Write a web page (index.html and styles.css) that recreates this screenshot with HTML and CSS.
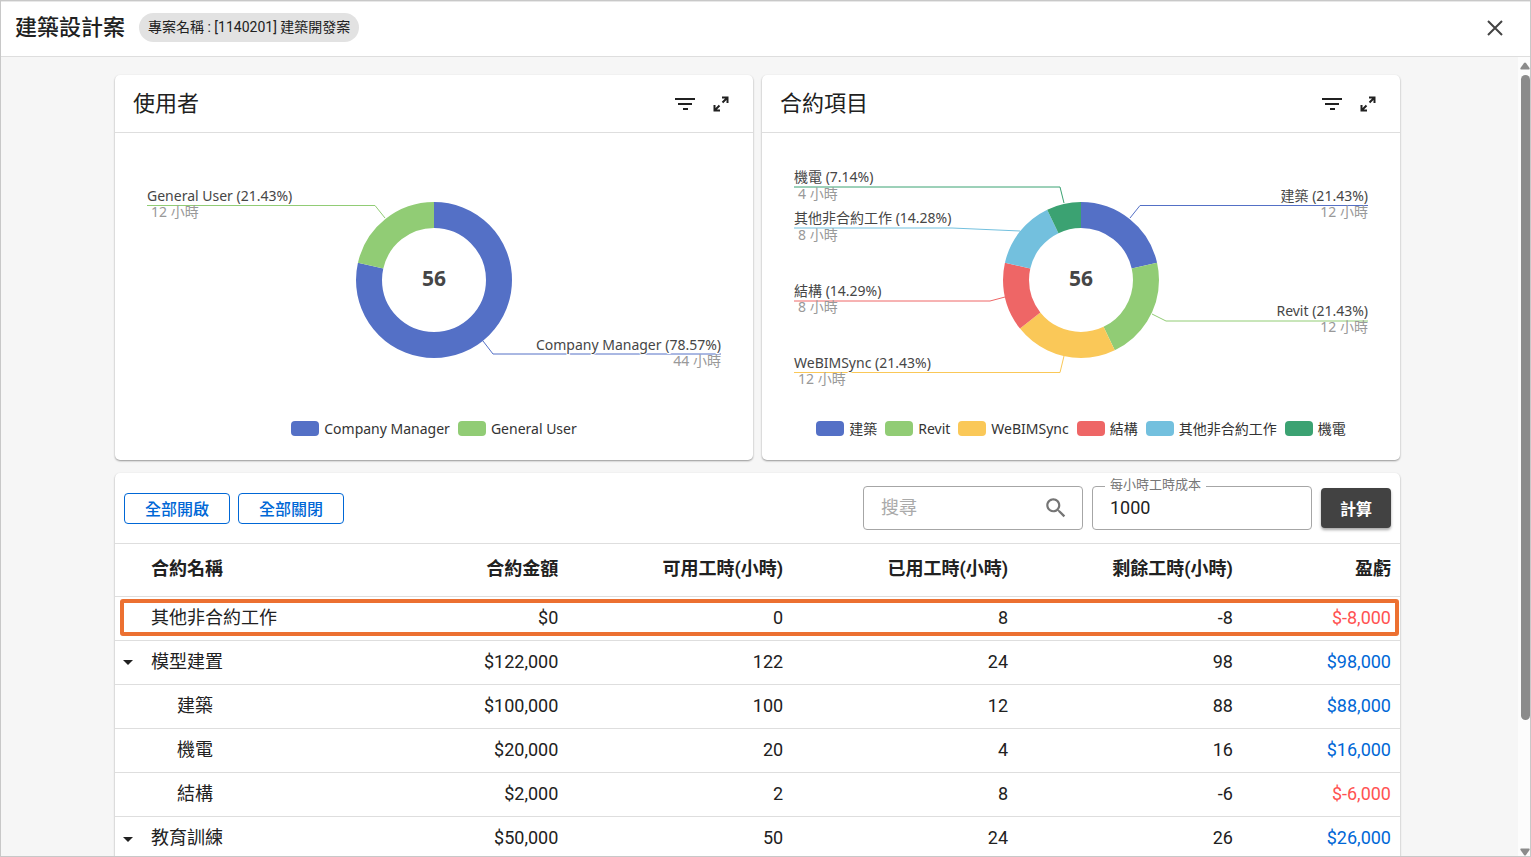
FILE: index.html
```html
<!DOCTYPE html>
<html lang="zh-Hant">
<head>
  <meta charset="UTF-8" />
  <meta name="viewport" content="width=device-width, initial-scale=1.0" />
  <title>建築設計案</title>
  <link rel="stylesheet" href="styles.css">
</head>
<body>
  <header class="topbar">
    <h1>建築設計案</h1>
    <span class="chip">專案名稱 : [1140201] 建築開發案</span>
    <button type="button" class="icon-btn close" aria-label="關閉">
      <svg width="16" height="16" viewBox="0 0 16 16"><path d="M1 1l14 14M15 1L1 15" stroke="#444" stroke-width="2" fill="none"/></svg>
    </button>
  </header>

  <div class="body">
    <main class="content">
      <div class="charts">
        <section class="card">
          <div class="card-header">
            <h2>使用者</h2>
            <button type="button" class="icon-btn" aria-label="篩選">
              <svg width="20" height="14" viewBox="0 0 20 14"><path d="M0 2h20M3 7h14M8 12h5" stroke="#212121" stroke-width="2"/></svg>
            </button>
            <button type="button" class="icon-btn" aria-label="展開">
              <svg width="16" height="16" viewBox="0 0 16 16"><path d="M9 1.500h5.500V7M14 2L9.500 6.500M1.500 9v5.500H7M2 14l4.500-4.500" stroke="#212121" stroke-width="2" fill="none"/></svg>
            </button>
          </div>
          <svg class="chart" viewBox="0 0 638 285">
            <!-- pathLength is the total hours, so each dash is the hours of its slice -->
            <g class="ring">
              <circle class="c1" cx="319" cy="147" r="65" pathLength="56" stroke-dasharray="44 12" />
              <circle class="c2" cx="319" cy="147" r="65" pathLength="56" stroke-dasharray="12 44" stroke-dashoffset="-44" />
            </g>
            <g class="lines">
              <path class="c2" d="M32 72.500H260L270 85" />
              <path class="c1" d="M606 221H378L368 208" />
            </g>
            <text x="32" y="68">General User (21.43%)</text>
            <text class="sub" x="36" y="84">12 小時</text>
            <text class="end" x="606" y="217">Company Manager (78.57%)</text>
            <text class="sub end" x="606" y="233">44 小時</text>
            <text class="total" x="319" y="153">56</text>
          </svg>
          <ul class="legend">
            <li><i class="b1"></i>Company Manager</li>
            <li><i class="b2"></i>General User</li>
          </ul>
        </section>

        <section class="card">
          <div class="card-header">
            <h2>合約項目</h2>
            <button type="button" class="icon-btn" aria-label="篩選">
              <svg width="20" height="14" viewBox="0 0 20 14"><path d="M0 2h20M3 7h14M8 12h5" stroke="#212121" stroke-width="2"/></svg>
            </button>
            <button type="button" class="icon-btn" aria-label="展開">
              <svg width="16" height="16" viewBox="0 0 16 16"><path d="M9 1.500h5.500V7M14 2L9.500 6.500M1.500 9v5.500H7M2 14l4.500-4.500" stroke="#212121" stroke-width="2" fill="none"/></svg>
            </button>
          </div>
          <svg class="chart" viewBox="0 0 638 285">
            <g class="ring">
              <circle class="c1" cx="319" cy="147" r="65" pathLength="56" stroke-dasharray="12 44" />
              <circle class="c2" cx="319" cy="147" r="65" pathLength="56" stroke-dasharray="12 44" stroke-dashoffset="-12" />
              <circle class="c3" cx="319" cy="147" r="65" pathLength="56" stroke-dasharray="12 44" stroke-dashoffset="-24" />
              <circle class="c4" cx="319" cy="147" r="65" pathLength="56" stroke-dasharray="8 48" stroke-dashoffset="-36" />
              <circle class="c5" cx="319" cy="147" r="65" pathLength="56" stroke-dasharray="8 48" stroke-dashoffset="-44" />
              <circle class="c6" cx="319" cy="147" r="65" pathLength="56" stroke-dasharray="4 52" stroke-dashoffset="-52" />
            </g>
            <g class="lines">
              <path class="c6" d="M32 54H298L302 70" />
              <path class="c5" d="M32 95H190L258 98" />
              <path class="c4" d="M32 168H228L243 164" />
              <path class="c3" d="M32 239.500H298L302 223" />
              <path class="c1" d="M606 72.500H378L368 85" />
              <path class="c2" d="M606 188H404L390 181" />
            </g>
            <text x="32" y="49">機電 (7.14%)</text>
            <text class="sub" x="36" y="66">4 小時</text>
            <text x="32" y="90">其他非合約工作 (14.28%)</text>
            <text class="sub" x="36" y="107">8 小時</text>
            <text x="32" y="163">結構 (14.29%)</text>
            <text class="sub" x="36" y="179">8 小時</text>
            <text x="32" y="235">WeBIMSync (21.43%)</text>
            <text class="sub" x="36" y="251">12 小時</text>
            <text class="end" x="606" y="68">建築 (21.43%)</text>
            <text class="sub end" x="606" y="84">12 小時</text>
            <text class="end" x="606" y="183">Revit (21.43%)</text>
            <text class="sub end" x="606" y="199">12 小時</text>
            <text class="total" x="319" y="153">56</text>
          </svg>
          <ul class="legend">
            <li><i class="b1"></i>建築</li>
            <li><i class="b2"></i>Revit</li>
            <li><i class="b3"></i>WeBIMSync</li>
            <li><i class="b4"></i>結構</li>
            <li><i class="b5"></i>其他非合約工作</li>
            <li><i class="b6"></i>機電</li>
          </ul>
        </section>
      </div>

      <section class="card">
        <div class="toolbar">
          <div class="expand-actions">
            <button type="button" class="btn-outline">全部開啟</button>
            <button type="button" class="btn-outline">全部關閉</button>
          </div>
          <div class="field">
            <input type="text" id="search" placeholder="搜尋" aria-label="搜尋" />
            <svg width="26" height="26" viewBox="0 0 24 24"><path fill="#757575" d="M15.500 14h-.79l-.28-.27C15.410 12.590 16 11.110 16 9.500 16 5.910 13.090 3 9.500 3S3 5.910 3 9.500 5.910 16 9.500 16c1.610 0 3.090-.59 4.230-1.570l.27.28v.79l5 4.990L20.490 19l-4.990-5zm-6 0C7.010 14 5 11.990 5 9.500S7.010 5 9.500 5 14 7.010 14 9.500 11.990 14 9.500 14z"/></svg>
          </div>
          <div class="field">
            <label for="cost">每小時工時成本</label>
            <input type="text" id="cost" value="1000" />
          </div>
          <button type="button" class="btn-dark">計算</button>
        </div>

        <table>
          <thead>
            <tr>
              <th>合約名稱</th>
              <th>合約金額</th>
              <th>可用工時(小時)</th>
              <th>已用工時(小時)</th>
              <th>剩餘工時(小時)</th>
              <th>盈虧</th>
            </tr>
          </thead>
          <tbody>
            <tr class="marked">
              <td>其他非合約工作</td>
              <td>$0</td>
              <td>0</td>
              <td>8</td>
              <td>-8</td>
              <td class="loss">$-8,000</td>
            </tr>
            <tr class="group">
              <td><button type="button" class="toggle" aria-label="收合"></button>模型建置</td>
              <td>$122,000</td>
              <td>122</td>
              <td>24</td>
              <td>98</td>
              <td class="profit">$98,000</td>
            </tr>
            <tr class="child">
              <td>建築</td>
              <td>$100,000</td>
              <td>100</td>
              <td>12</td>
              <td>88</td>
              <td class="profit">$88,000</td>
            </tr>
            <tr class="child">
              <td>機電</td>
              <td>$20,000</td>
              <td>20</td>
              <td>4</td>
              <td>16</td>
              <td class="profit">$16,000</td>
            </tr>
            <tr class="child">
              <td>結構</td>
              <td>$2,000</td>
              <td>2</td>
              <td>8</td>
              <td>-6</td>
              <td class="loss">$-6,000</td>
            </tr>
            <tr class="group">
              <td><button type="button" class="toggle" aria-label="收合"></button>教育訓練</td>
              <td>$50,000</td>
              <td>50</td>
              <td>24</td>
              <td>26</td>
              <td class="profit">$26,000</td>
            </tr>
          </tbody>
        </table>
      </section>
    </main>

    <div class="scrollbar" aria-hidden="true">
      <svg width="10" height="8" viewBox="0 0 10 8"><path fill="#8b8b8b" d="M4 1q1-1 2 0l3.500 5q.5 1.500-.5 1.500H1Q0 7.500.5 6z"/></svg>
      <div class="track"><div class="thumb"></div></div>
      <svg width="10" height="8" viewBox="0 0 10 8"><path fill="#8b8b8b" d="M4 7q1 1 2 0l3.500-5q.5-1.500-.5-1.500H1Q0 .5.5 2z"/></svg>
    </div>
  </div>
</body>
</html>
```
FILE: styles.css
```css
:root {
  --text: #212121;
  --line: #dedede;
  --blue: #0067d6;
  --red: #ff5252;
  --c1: #5470c6;
  --c2: #91cc75;
  --c3: #fac858;
  --c4: #ee6666;
  --c5: #73c0de;
  --c6: #3ba272;
}

* {
  box-sizing: border-box;
}

body {
  margin: 0;
  height: 100vh;
  display: flex;
  flex-direction: column;
  overflow: hidden;
  border: 1px solid #c8c8c8;
  background: #f6f6f6;
  color: var(--text);
  font-family: Roboto, "Noto Sans CJK TC", sans-serif;
  font-size: 18px;
}

h1, h2 {
  margin: 0;
  font-size: 22px;
  line-height: 32px;
  font-weight: 500;
}

h2 {
  font-weight: 400;
}

button, input {
  font-family: inherit;
  color: inherit;
}

button {
  padding: 0;
  cursor: pointer;
}

/* top bar */
.topbar {
  flex: none;
  display: flex;
  align-items: center;
  height: 56px;
  padding: 0 23px 3px 14px;
  background: #fff;
  border-top: 1px solid #e8e8e8;
  border-bottom: 1px solid var(--line);
}

.chip {
  margin-left: 14px;
  padding: 0 9px;
  border-radius: 15px;
  background: #e2e2e2;
  font-size: 14px;
  line-height: 29px;
}

.icon-btn {
  display: flex;
  align-items: center;
  justify-content: center;
  width: 24px;
  height: 24px;
  border: none;
  background: none;
}

.close {
  margin-left: auto;
}

/* page body */
.body {
  flex: 1;
  min-height: 0;
  display: flex;
}

.content {
  flex: 1;
  overflow: hidden;
  padding: 18px 20px 0 16px;
}

.content > * {
  max-width: 1285px;
  margin: 0 auto 13px;
}

.charts {
  display: grid;
  grid-template-columns: 1fr 1fr;
  gap: 9px;
}

.card {
  background: #fff;
  border-radius: 5px;
  box-shadow: 0 1px 2px rgba(0, 0, 0, 0.4);
}

.card-header {
  display: flex;
  align-items: center;
  gap: 12px;
  height: 58px;
  padding: 0 20px 0 18px;
  border-bottom: 1px solid var(--line);
}

.card-header h2 {
  flex: 1;
}

/* charts */
.chart {
  display: block;
  width: 100%;
}

.ring circle {
  fill: none;
  stroke-width: 26;
  transform: rotate(-90deg);
  transform-origin: 319px 147px;
}

.lines path {
  fill: none;
  stroke-width: 1;
}

.c1 { stroke: var(--c1); }
.c2 { stroke: var(--c2); }
.c3 { stroke: var(--c3); }
.c4 { stroke: var(--c4); }
.c5 { stroke: var(--c5); }
.c6 { stroke: var(--c6); }

.chart text {
  font-family: "Noto Sans", "Noto Sans CJK TC", sans-serif;
  font-size: 14px;
  fill: #464646;
  stroke: #fff;
  stroke-width: 2px;
  paint-order: stroke;
}

.chart .sub {
  fill: #999;
  stroke: none;
}

.chart .end {
  text-anchor: end;
}

.chart .total {
  font-size: 21px;
  font-weight: 700;
  text-anchor: middle;
}

.legend {
  display: flex;
  justify-content: center;
  gap: 8px;
  margin: 0;
  padding: 0 0 21px;
  list-style: none;
  font-family: "Noto Sans", "Noto Sans CJK TC", sans-serif;
  font-size: 14px;
  line-height: 21px;
  color: #333;
}

.legend li {
  display: flex;
  align-items: center;
  gap: 5px;
}

.legend i {
  width: 28px;
  height: 15px;
  border-radius: 4px;
}

.b1 { background: var(--c1); }
.b2 { background: var(--c2); }
.b3 { background: var(--c3); }
.b4 { background: var(--c4); }
.b5 { background: var(--c5); }
.b6 { background: var(--c6); }

/* toolbar */
.toolbar {
  display: flex;
  align-items: center;
  gap: 9px;
  height: 70px;
  padding: 0 9px;
}

.expand-actions {
  display: flex;
  gap: 8px;
  margin-right: auto;
}

.btn-outline {
  width: 106px;
  height: 31px;
  border: 1px solid var(--blue);
  border-radius: 4px;
  background: #fff;
  color: var(--blue);
  font-size: 16px;
  font-weight: 500;
}

.field {
  position: relative;
  width: 220px;
}

.field input {
  display: block;
  width: 100%;
  height: 44px;
  padding: 0 17px 2px;
  border: 1px solid #a6a6a6;
  border-radius: 4px;
  background: none;
  font-size: 18px;
}

.field input::placeholder {
  color: #aaa;
}

.field label {
  position: absolute;
  top: -11px;
  left: 13px;
  padding: 0 5px;
  background: #fff;
  color: #777;
  font-size: 13px;
  line-height: 20px;
}

.field svg {
  position: absolute;
  top: 9px;
  right: 14px;
}

.btn-dark {
  width: 70px;
  height: 40px;
  border: none;
  border-radius: 4px;
  background: #424242;
  color: #fff;
  font-size: 16px;
  font-weight: 700;
  box-shadow: 0 2px 3px rgba(0, 0, 0, 0.35);
}

/* contract table */
table {
  width: 100%;
  table-layout: fixed;
  border-collapse: collapse;
}

th, td {
  height: 44px;
  padding: 0 9px 2px;
  border-top: 1px solid var(--line);
  line-height: 24px;
  text-align: right;
  white-space: nowrap;
}

th {
  height: 53px;
  width: 17.5%;
  font-weight: 700;
}

th:first-child {
  width: auto;
}

th:last-child {
  width: 12.3%;
}

th:first-child, td:first-child {
  padding-left: 36px;
  text-align: left;
}

.child td:first-child {
  padding-left: 62px;
}

.group td:first-child {
  padding-left: 0;
}

.toggle {
  width: 26px;
  height: 20px;
  margin-right: 10px;
  border: none;
  background: none;
  vertical-align: middle;
}

.toggle::before {
  content: "";
  display: block;
  width: 0;
  margin: 0 auto;
  border: 5px solid transparent;
  border-top-color: var(--text);
  border-bottom: none;
}

.profit {
  color: var(--blue);
}

.loss {
  color: var(--red);
}

.marked {
  position: relative;
}

.marked td:first-child::after {
  content: "";
  position: absolute;
  top: 2px;
  left: 5px;
  right: 1px;
  bottom: 5px;
  border: 4px solid #ec7031;
  border-radius: 3px;
}

/* scrollbar */
.scrollbar {
  display: flex;
  flex-direction: column;
  align-items: center;
  width: 12px;
  padding: 5px 0 0 2px;
  background: #fcfcfc;
}

.track {
  flex: 1;
  width: 9px;
  padding: 5px 0;
}

.thumb {
  height: 84%;
  border-radius: 5px;
  background: #8b8b8b;
}
```
